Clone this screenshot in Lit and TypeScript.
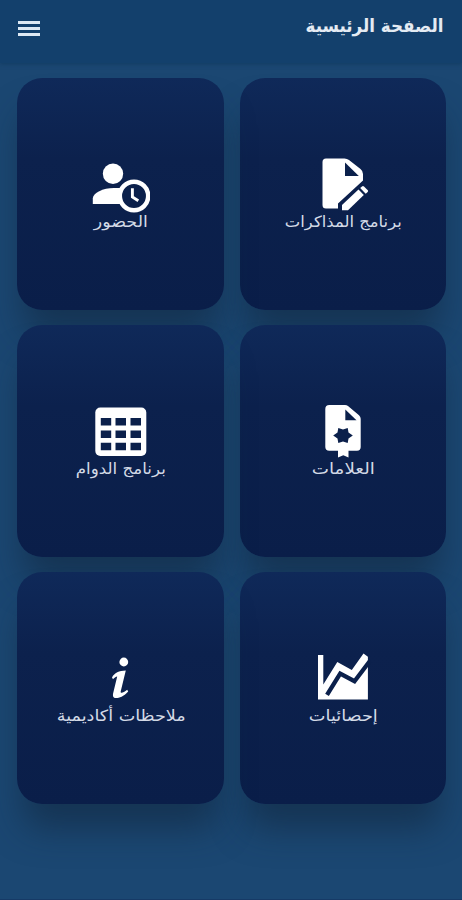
import { LitElement, html, css, svg } from "lit";
import { customElement } from "lit/decorators.js";

const tiles = [
  {
    label: "برنامج المذاكرات",
    width: 117,
    icon: svg`<path d="M13 4.500H31.500Q34 4.500 36 6L47.500 15Q50 17 50 20V26.500L25 49.500V54.500H13Q9.500 54.500 9.500 51V8Q9.500 4.500 13 4.500Z"/>
      <path class="hole" d="M32 8.500V22H45.800Z"/>
      <path d="M29 51L45.500 35.600L50.800 41L35 56.300H29Z"/>
      <path d="M47.200 34L49 32.500Q50 31.700 51 32.600L54.800 36.200Q55.500 37 54.700 38L52.700 39.700Z"/>`,
  },
  {
    label: "الحضور",
    width: 54,
    icon: svg`<circle cx="23" cy="19.800" r="10.200"/>
      <path d="M2.800 50V44.500C2.800 39 13 34 24 34H38V50Z"/>
      <circle cx="44" cy="42" r="14.200" class="dial"/>
      <path class="hand" d="M42.400 34.300V43L48.300 46.700"/>`,
  },
  {
    label: "العلامات",
    width: 63,
    icon: svg`<path d="M16.300 4H32Q33.700 4 35 5L46 14.300Q47.700 15.800 47.700 17.800V46Q47.700 49.700 44 49.700H35.500V56.500L30.300 54.300L25 56.500V49.700H16.300Q12.300 49.700 12.300 46V8Q12.300 4 16.300 4Z"/>
      <path class="hole" d="M32.300 8.500V19.300H43.500Z"/>
      <path class="hole" d="M39.800 34.500L35.500 37.500L34.700 42L30 40.600L25.300 42L24.500 37.500L20.200 34.500L24.500 31.500L25.300 27L30 28.400L34.700 27L35.500 31.500Z"/>`,
  },
  {
    label: "برنامج الدوام",
    width: 90,
    icon: svg`<rect x="5.300" y="6.500" width="51" height="48.500" rx="5"/>
      <path class="hole" transform="translate(.5 0)" d="M10.300 17H20.700V24.600H10.300ZM25 17H35.500V24.600H25ZM40 17H50.500V24.600H40ZM10.300 29.500H20.700V37.100H10.300ZM25 29.500H35.500V37.100H25ZM40 29.500H50.500V37.100H40ZM10.300 41.700H20.700V49.300H10.300ZM25 41.700H35.500V49.300H25ZM40 41.700H50.500V49.300H40Z"/>`,
  },
  {
    label: "إحصائيات",
    width: 69,
    icon: svg`<path d="M5 7H10.300V36.500L24.300 14L38.800 22L50.500 5.500L54.900 8.800V51.500H5Z"/>
      <path class="gap" d="M14 46.900L27.200 25.500L41.500 33.200L56.700 13.300"/>`,
  },
  {
    label: "ملاحظات أكاديمية",
    width: 129,
    icon: svg`<circle cx="33.800" cy="14" r="4.400"/>
      <path d="M22 29.500C24.500 25 29 22.800 35.800 22.600L30.700 43.500C30.200 45.800 33.500 44.800 37.200 41.800L38.200 43.500C33.500 48.500 29.500 50 26 50C23.200 50 22.500 48 23.200 45L27.200 28.500C25.800 28.700 24.200 29.800 23 31.300Z"/>`,
  },
];

@customElement("app-root")
export class AppRoot extends LitElement {
  static styles = css`
    :host {
      display: flex;
      flex-direction: column;
      box-sizing: border-box;
      height: 900px;
      overflow: hidden;
      background: #1b4772;
      border-bottom: 1px solid #163a66;
      color: #e4ebf3;
      font-family: "DejaVu Sans", sans-serif;
    }
    .bar {
      flex: none;
      height: 63px;
      box-sizing: border-box;
      padding: 0 18px;
      display: flex;
      align-items: flex-start;
      justify-content: space-between;
      background: #13406c;
      box-shadow: 0 1px 4px rgba(14, 56, 92, 0.7);
    }
    .title {
      margin: 11px 0 0;
      width: 139px;
      height: 30px;
    }
    .menu {
      margin-top: 21px;
      width: 22px;
      height: 15px;
      display: flex;
      flex-direction: column;
      justify-content: space-between;
    }
    .line {
      height: 3px;
      background: #dde9f4;
    }
    .grid {
      display: grid;
      grid-template-columns: 1fr 1fr;
      grid-auto-rows: 232px;
      gap: 15px 16px;
      padding: 15px 16px 0 17px;
    }
    .tile {
      display: flex;
      flex-direction: column;
      align-items: center;
      justify-content: center;
      border-radius: 25px;
      background: linear-gradient(#0f2959, #0c214d 35%, #0a1e49);
      box-shadow: 0 30px 34px -6px rgba(18, 40, 64, 0.62);
    }
    .icon {
      width: 60px;
      height: 60px;
      fill: #fff;
    }
    .hole {
      fill: #0b204b;
    }
    .dial {
      fill: #0b204b;
      stroke: #fff;
      stroke-width: 4.500;
    }
    .hand {
      fill: none;
      stroke: #fff;
      stroke-width: 2.900;
    }
    .gap {
      fill: none;
      stroke: #0b204b;
      stroke-width: 4.300;
    }
    .label {
      height: 20px;
      overflow: visible;
      fill: #d3dae6;
      font-size: 15.500px;
    }
    .heading {
      display: block;
      width: 139px;
      height: 30px;
      overflow: visible;
      fill: #e4ebf3;
      font-size: 18px;
      font-weight: 700;
    }
  `;

  render() {
    return html`
      <header class="bar" dir="rtl">
        <h1 class="title">
          <svg class="heading" direction="rtl">
            <text x="138.500" y="21" textLength="138" lengthAdjust="spacingAndGlyphs">الصفحة الرئيسية</text>
          </svg>
        </h1>
        <div class="menu"><i class="line"></i><i class="line"></i><i class="line"></i></div>
      </header>
      <main class="grid" dir="rtl">
        ${tiles.map(
          (t) => html`<section class="tile">
            <svg class="icon" viewBox="0 0 60 60">${t.icon}</svg>
            <svg class="label" width=${t.width}>
              <text x=${t.width + 0.8} y="13" textLength=${t.width} lengthAdjust="spacingAndGlyphs">${t.label}</text>
            </svg>
          </section>`
        )}
      </main>
    `;
  }
}
